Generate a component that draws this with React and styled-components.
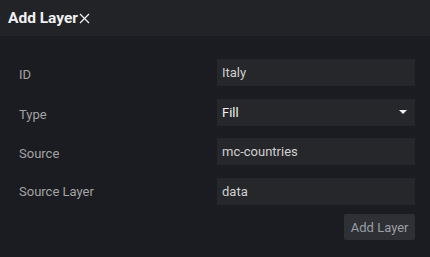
import React from "react";
import styled, { createGlobalStyle } from "styled-components";

const Global = createGlobalStyle`
  html, body { margin: 0; padding: 0; background: #1b1c21; }
  body { font-family: Roboto, "Liberation Sans", sans-serif; }
`;

const Modal = styled.div`
  width: 430px;
  height: 257px;
  background: #1b1c21;
  display: flex;
  flex-direction: column;
`;

const Header = styled.div`
  height: 36px;
  background: #222327;
  display: flex;
  align-items: center;
  padding: 0 8px;
  box-sizing: border-box;
`;

const Title = styled.h1`
  margin: 0;
  font-size: 15.5px;
  font-weight: 700;
  color: #f0f0f0;
`;

const Close = styled.button`
  background: none;
  border: none;
  padding: 0 0 0 1px;
  color: #f0f0f0;
  display: flex;
  align-items: center;
`;

const Body = styled.div`
  padding: 23px 15px 0 19px;
  display: flex;
  flex-direction: column;
`;

const Row = styled.div`
  display: grid;
  grid-template-columns: 198px 198px;
  align-items: center;
  height: 27px;
  margin-bottom: 12.5px;
`;

const Label = styled.label`
  font-size: 13px;
  color: #a3a3a3;
  position: relative;
  top: ${(p) => p.$dy}px;
`;

const Input = styled.div`
  height: 27px;
  background: #25272b;
  color: ${(p) => (p.$bright ? "#f0f0f0" : "#cfcfcf")};
  font-size: 13px;
  display: flex;
  align-items: center;
  justify-content: space-between;
  padding: 0 8px 0 5px;
  box-sizing: border-box;
`;

const Footer = styled.div`
  display: flex;
  justify-content: flex-end;
  padding-right: 15px;
  margin-top: -3px;
`;

const Button = styled.button`
  height: 26px;
  padding: 0 6.5px;
  background: #2e3035;
  border: none;
  border-radius: 2px;
  color: #9a9ea3;
  font-family: Roboto, "Liberation Sans", sans-serif;
  font-size: 13px;
`;

const Caret = () => (
  <svg width="8" height="5" viewBox="0 0 8 5">
    <path d="M0 0 L8 0 L4 4 Z" fill="#f0f0f0" />
  </svg>
);

const rows = [
  { label: "ID", value: "Italy", dy: 2 },
  { label: "Type", value: "Fill", select: true, dy: 2 },
  { label: "Source", value: "mc-countries", dy: 2 },
  { label: "Source Layer", value: "data", dy: 0 },
];

export default function App() {
  return (
    <Modal>
      <Global />
      <Header>
        <Title>Add Layer</Title>
        <Close aria-label="close">
          <svg width="11" height="11" viewBox="0 0 11 11">
            <path d="M1 1 L10 10 M10 1 L1 10" stroke="#f0f0f0" strokeWidth="1.3" />
          </svg>
        </Close>
      </Header>
      <Body>
        {rows.map((r) => (
          <Row key={r.label}>
            <Label $dy={r.dy}>{r.label}</Label>
            <Input $bright={r.select}>
              <span>{r.value}</span>
              {r.select && <Caret />}
            </Input>
          </Row>
        ))}
      </Body>
      <Footer>
        <Button>Add Layer</Button>
      </Footer>
    </Modal>
  );
}
